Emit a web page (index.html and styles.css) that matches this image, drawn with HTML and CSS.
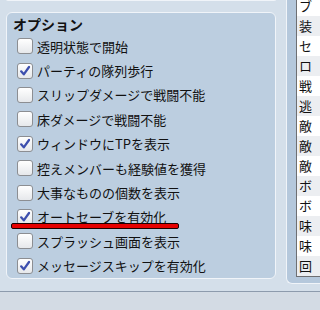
FILE: index.html
```html
<!DOCTYPE html>
<html lang="ja">
<head>
  <meta charset="UTF-8">
  <title>オプション</title>
  <link rel="stylesheet" href="styles.css">
</head>
<body>
  <div class="window">
    <div class="left">
      <div class="prev-panel"></div>
      <div class="options">
        <div class="title">オプション</div>
        <div class="opt"><span class="box"></span>透明状態で開始</div>
        <div class="opt"><span class="box checked"><svg viewBox="0 0 16 16"><path d="M3.6 8.4 L6.6 11.8 L12.6 3.4"/></svg></span>パーティの隊列歩行</div>
        <div class="opt"><span class="box"></span>スリップダメージで戦闘不能</div>
        <div class="opt"><span class="box"></span>床ダメージで戦闘不能</div>
        <div class="opt"><span class="box checked"><svg viewBox="0 0 16 16"><path d="M3.6 8.4 L6.6 11.8 L12.6 3.4"/></svg></span>ウィンドウにTPを表示</div>
        <div class="opt"><span class="box"></span>控えメンバーも経験値を獲得</div>
        <div class="opt"><span class="box"></span>大事なものの個数を表示</div>
        <div class="opt"><span class="box checked"><svg viewBox="0 0 16 16"><path d="M3.6 8.4 L6.6 11.8 L12.6 3.4"/></svg></span>オートセーブを有効化</div>
        <div class="opt"><span class="box"></span>スプラッシュ画面を表示</div>
        <div class="opt"><span class="box checked"><svg viewBox="0 0 16 16"><path d="M3.6 8.4 L6.6 11.8 L12.6 3.4"/></svg></span>メッセージスキップを有効化</div>
        <div class="marker"></div>
      </div>
    </div>
    <div class="side">
      <div class="list">
        <div class="row">ブ</div>
        <div class="row">装</div>
        <div class="row">セ</div>
        <div class="row">ロ</div>
        <div class="row">戦</div>
        <div class="row">逃</div>
        <div class="row">敵</div>
        <div class="row">敵</div>
        <div class="row">敵</div>
        <div class="row">ボ</div>
        <div class="row">ボ</div>
        <div class="row">味</div>
        <div class="row">味</div>
        <div class="row">回</div>
      </div>
    </div>
  </div>
  <div class="footer"></div>
</body>
</html>
```

FILE: styles.css
```css
:root {
  --bg: #d4dfea;
  --panel: #bccee0;
  --panel-dark: #b5c8dc;
  --edge: #f0f4f9;
  --text: #111111;
  --check: #3d4fae;
}

* {
  box-sizing: border-box;
}

body {
  margin: 0;
  width: 320px;
  height: 310px;
  overflow: hidden;
  background: var(--bg);
  color: var(--text);
  font-family: "Noto Sans CJK JP", "Noto Sans", sans-serif;
}

.window {
  display: flex;
  height: 292px;
  border-bottom: 1px solid #8d9bad;
}

.left {
  width: 276px;
  padding-left: 6px;
  display: flex;
  flex-direction: column;
}

.prev-panel {
  height: 2px;
  margin-top: -1px;
  background: var(--panel);
  border: 1px solid var(--edge);
  border-top: none;
  border-radius: 0 0 3px 3px;
}

.options {
  position: relative;
  margin-top: 11px;
  height: 267px;
  background: var(--panel);
  border: 1px solid var(--edge);
  border-radius: 6px;
}

.title {
  height: 20px;
  margin-top: 1px;
  padding-left: 6px;
  font-size: 14px;
  font-weight: bold;
  line-height: 20px;
}

.opt {
  display: flex;
  align-items: center;
  gap: 4px;
  height: 24.4px;
  padding-left: 10px;
  font-size: 13px;
  white-space: nowrap;
}

.box {
  flex: none;
  width: 16px;
  height: 16px;
  border: 1px solid #8c8e92;
  border-radius: 3px;
  background: linear-gradient(#ffffff, #e6e8eb);
}

.box svg {
  display: block;
  width: 14px;
  height: 14px;
}

.box path {
  fill: none;
  stroke: var(--check);
  stroke-width: 2.6;
  stroke-linecap: round;
  stroke-linejoin: round;
}

.marker {
  position: absolute;
  left: 4px;
  top: 210px;
  width: 168px;
  height: 6px;
  background: #e60000;
  border: 1px solid #1a0000;
  border-radius: 2px;
}

.side {
  flex: 1;
  margin-left: 10px;
  margin-top: -10px;
  height: 294px;
  padding-left: 9px;
  background: var(--panel-dark);
  border-left: 1px solid var(--edge);
  border-bottom: 1px solid var(--edge);
  border-radius: 0 0 0 6px;
}

.list {
  padding-top: 6px;
  background: #ffffff;
  border-left: 1px solid #6e6f72;
  border-bottom: 1px solid #6e6f72;
}

.row {
  height: 20px;
  padding-left: 2px;
  font-size: 13px;
  line-height: 20px;
}

.row:nth-child(even) {
  background: #eceef1;
}

.footer {
  height: 18px;
  background: #d3dbe4;
}
```
